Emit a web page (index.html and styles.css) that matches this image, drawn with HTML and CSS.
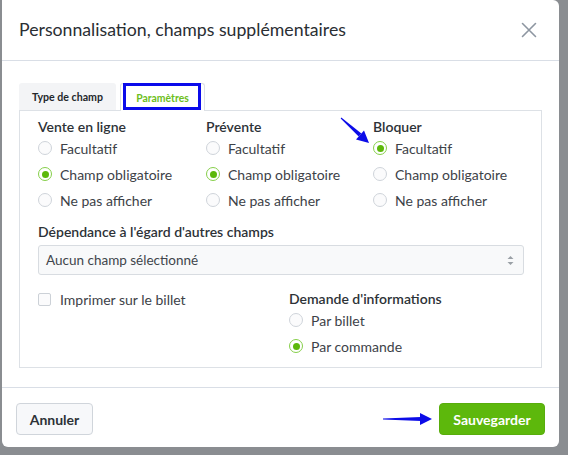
FILE: index.html
```html
<!DOCTYPE html>
<html lang="fr">
<head>
<meta charset="utf-8">
<title>Personnalisation, champs supplémentaires</title>
<link rel="stylesheet" href="styles.css">
</head>
<body>
<div class="modal">
  <header class="modal-header">
    <h1 class="modal-title">Personnalisation, champs supplémentaires</h1>
    <button class="close" type="button" aria-label="Fermer">
      <svg width="16" height="16" viewBox="0 0 16 16"><path d="M1.5 1.5 L14.5 14.5 M14.5 1.5 L1.5 14.5" stroke="#8d96a1" stroke-width="1.6" fill="none" stroke-linecap="round"/></svg>
    </button>
  </header>

  <div class="modal-body">
    <div class="tabs">
      <div class="tab">Type de champ</div>
      <div class="tab active">Paramètres</div>
    </div>
    <div class="panel">
      <div class="cols">
        <div class="group">
          <div class="group-title">Vente en ligne</div>
          <div class="radio"><span class="circle"></span>Facultatif</div>
          <div class="radio"><span class="circle checked"></span>Champ obligatoire</div>
          <div class="radio"><span class="circle"></span>Ne pas afficher</div>
        </div>
        <div class="group">
          <div class="group-title">Prévente</div>
          <div class="radio"><span class="circle"></span>Facultatif</div>
          <div class="radio"><span class="circle checked"></span>Champ obligatoire</div>
          <div class="radio"><span class="circle"></span>Ne pas afficher</div>
        </div>
        <div class="group">
          <div class="group-title">Bloquer</div>
          <div class="radio"><span class="circle checked"></span>Facultatif</div>
          <div class="radio"><span class="circle"></span>Champ obligatoire</div>
          <div class="radio"><span class="circle"></span>Ne pas afficher</div>
        </div>
      </div>

      <div class="field-label">Dépendance à l'égard d'autres champs</div>
      <div class="select">
        <span>Aucun champ sélectionné</span>
        <svg class="select-arrows" width="7" height="11" viewBox="0 0 7 11"><path d="M3.5 1 L6.5 4 L0.5 4 Z M3.5 10 L6.5 7 L0.5 7 Z" fill="#9aa0a6"/></svg>
      </div>

      <div class="bottom">
        <div class="check-row"><span class="box"></span>Imprimer sur le billet</div>
        <div class="group">
          <div class="group-title">Demande d'informations</div>
          <div class="radio"><span class="circle"></span>Par billet</div>
          <div class="radio"><span class="circle checked"></span>Par commande</div>
        </div>
      </div>
    </div>
  </div>

  <footer class="modal-footer">
    <button class="btn btn-default" type="button">Annuler</button>
    <button class="btn btn-primary" type="button">Sauvegarder</button>
  </footer>

  <div class="annot-box"></div>
  <svg class="annot annot-1" width="40" height="34" viewBox="0 0 40 34">
    <polygon points="4.3,3.6 24.4,19.5 21.7,22.5 3.7,4.4" fill="#0c0ce8"/>
    <polygon points="32,29 19,25.5 27,16.5" fill="#0c0ce8"/>
  </svg>
  <svg class="annot annot-2" width="56" height="20" viewBox="0 0 56 20">
    <polygon points="3,8.4 41,7 41,11 3,9.6" fill="#0c0ce8"/>
    <polygon points="40,3 52,9 40,15" fill="#0c0ce8"/>
  </svg>
</div>
</body>
</html>
```

FILE: styles.css
```css
* { box-sizing: border-box; }

html, body {
  margin: 0;
  padding: 0;
  background: #8a8d91;
  height: 455px;
  overflow: hidden;
}

body {
  font-family: Lato, "Liberation Sans", sans-serif;
  color: #33383d;
}

.modal {
  position: relative;
  margin-left: 2px;
  width: 557px;
  height: 447px;
  background: #ffffff;
  border-radius: 0 6px 6px 6px;
  display: flex;
  flex-direction: column;
}

.modal-header {
  height: 61px;
  border-bottom: 1px solid #d9dee6;
  display: flex;
  align-items: center;
  justify-content: space-between;
  padding: 0 22px 0 17px;
}

.modal-title {
  margin: 0;
  font-size: 17.7px;
  font-weight: 400;
  color: #2a2e33;
  padding-bottom: 1px;
}

.close {
  border: 0;
  background: none;
  padding: 0;
  width: 16px;
  height: 16px;
  display: block;
  margin-bottom: 1px;
}
.close svg { display: block; }

.modal-body {
  padding: 22px 17px 16px 17px;
}

.tabs {
  display: flex;
  height: 27px;
}

.tab {
  height: 27px;
  line-height: 28px;
  padding: 0;
  font-size: 10.6px;
  font-weight: 700;
  color: #23272b;
  background: #f3f4f6;
  border-radius: 3px 3px 0 0;
  width: 97px;
  text-align: center;
  white-space: nowrap;
}

.tab.active {
  margin-left: 4px;
  width: 85px;
  background: #ffffff;
  color: #6cbe20;
  border: 1px solid #dde1e6;
  border-bottom: 0;
  height: 28px;
  margin-bottom: -1px;
  position: relative;
  z-index: 1;
  line-height: 28px;
  font-size: 10.4px;
}

.panel {
  border: 1px solid #dde1e6;
  padding: 8px 17px 8px 18px;
}

.cols {
  display: grid;
  grid-template-columns: 168px 167px 1fr;
}

.group-title {
  font-size: 14px;
  line-height: 16px;
  font-weight: 600;
  color: #2d3237;
}

.radio {
  display: flex;
  align-items: center;
  height: 26px;
  font-size: 14px;
  color: #3d4248;
}

.circle {
  width: 14px;
  height: 14px;
  border-radius: 50%;
  border: 1px solid #cfd4da;
  background: #fbfbfc;
  margin-right: 8px;
  flex: none;
  position: relative;
}

.circle.checked {
  border-color: #86cf4a;
  background: #ffffff;
}
.circle.checked::after {
  content: "";
  position: absolute;
  left: 2.5px;
  top: 2.5px;
  width: 7px;
  height: 7px;
  border-radius: 50%;
  background: #5cb80a;
}

.field-label {
  margin-top: 10px;
  font-size: 14px;
  line-height: 18px;
  font-weight: 600;
  color: #2d3237;
}

.select {
  margin-top: 4px;
  height: 30px;
  border: 1px solid #d8dce1;
  border-radius: 3px;
  background: #f8f9fa;
  display: flex;
  align-items: center;
  justify-content: space-between;
  padding: 0 9px 0 7px;
  font-size: 13.5px;
  color: #40454b;
}
.select-arrows { display: block; }

.bottom {
  margin-top: 15px;
  display: grid;
  grid-template-columns: 234px 1fr;
  column-gap: 17px;
}

.check-row {
  display: flex;
  align-items: center;
  height: 18px;
  font-size: 14px;
  color: #3d4248;
}

.box {
  width: 13px;
  height: 13px;
  border: 1px solid #ccd1d7;
  border-radius: 2px;
  background: #fbfbfc;
  margin-right: 9px;
  flex: none;
}

.bottom .group-title {
  line-height: 17px;
}

.modal-footer {
  border-top: 1px solid #d9dee6;
  padding: 15px 14px 12px 14px;
  display: flex;
  justify-content: space-between;
  margin-top: auto;
}

.btn {
  height: 32px;
  border-radius: 4px;
  font-family: Lato, "Liberation Sans", sans-serif;
  font-size: 14px;
  font-weight: 700;
  padding: 0;
}

.btn-default {
  width: 77px;
  background: #f7f8fa;
  border: 1px solid #d0d5db;
  color: #2d3237;
}

.btn-primary {
  width: 106px;
  background: #5db80c;
  border: 1px solid #58ad0c;
  color: #ffffff;
}

.annot-box {
  position: absolute;
  left: 121px;
  top: 83px;
  width: 78px;
  height: 27px;
  border: 3px solid #0b0bea;
  z-index: 2;
}

.annot {
  position: absolute;
  z-index: 3;
}
.annot-1 { left: 335px; top: 114px; }
.annot-2 { left: 378px; top: 410px; }
```
